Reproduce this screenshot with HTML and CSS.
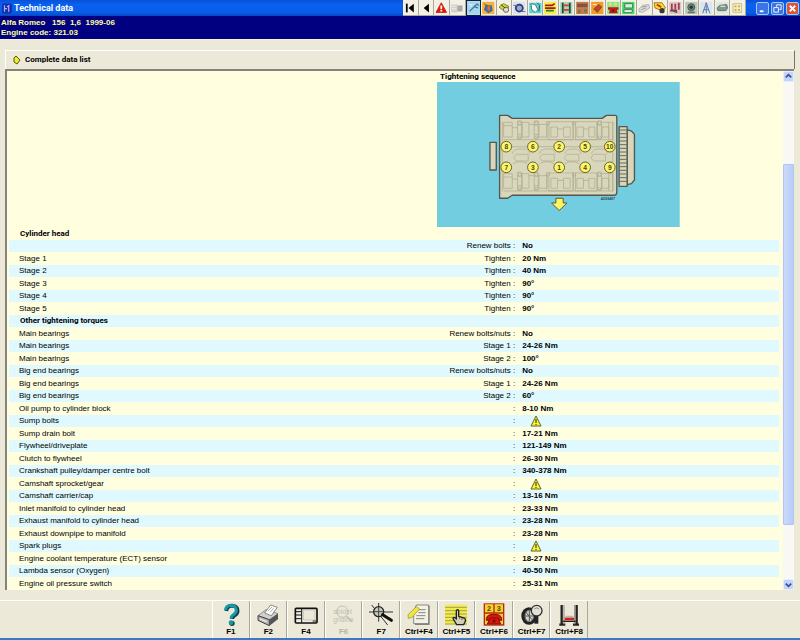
FILE: index.html
```html
<!DOCTYPE html>
<html lang="en">
<head>
<meta charset="utf-8">
<title>Technical data</title>
<link rel="stylesheet" href="styles.css">
</head>
<body>
<header class="titlebar">
  <svg class="app-icon" viewBox="0 0 12 12"><rect width="12" height="12" rx="2" fill="#1a2bb0"/><path d="M3 2v8M3 6h3M8 3v7M6 4l3-2" stroke="#9ab4f4" stroke-width="1.5" fill="none"/></svg>
  <h1>Technical data</h1>
  <nav class="tools" aria-label="Modules">
    <button aria-label="First"><svg viewBox="0 0 16 16"><path d="M4 3v10" stroke="#000" stroke-width="2"/><path d="M12 3v10L6 8z"/></svg></button>
    <button aria-label="Previous"><svg viewBox="0 0 16 16"><path d="M11 3v10L5 8z"/></svg></button>
    <button aria-label="Warnings"><svg viewBox="0 0 16 16"><path d="M8 2l6 11H2z" fill="#e01808" stroke="#c02010"/><path d="M8 5v4M8 10v2" stroke="#fff" stroke-width="2"/></svg></button>
    <button aria-label="Identification"><svg viewBox="0 0 16 16"><path d="M1 4h7v9H1z" fill="#d2d0c8"/><path d="M8 5h6v7H8z" fill="#aaa9a4"/><path d="M2 6h4M2 9h5" stroke="#f5f5f5"/></svg></button>
    <button class="pressed" aria-label="Technical data"><svg viewBox="0 0 16 16"><path d="M0 0h16v16H0z" fill="#a4d5ed"/><path d="M3 12l8-8M8 6l5 2M11 3l3 2" stroke="#466b8d" stroke-width="1.5"/><path d="M2 4h5M3 6h3" stroke="#e9f4f5"/></svg></button>
    <button aria-label="Service"><svg viewBox="0 0 16 16"><path d="M1 1h14v14H1z" fill="#f4b33d"/><path d="M5 4l7 1 1 6-5 3-5-4z" fill="#3271a9"/><path d="M7 5h3v6H7z" fill="#e96c20"/><path d="M3 3l4 3" stroke="#845629"/></svg></button>
    <button aria-label="Repair times"><svg viewBox="0 0 16 16"><path d="M2 7l5-4 6 3-1 3-6 1z" fill="#d7dc20" stroke="#777718"/><circle cx="10" cy="10" r="3" fill="#ddd" stroke="#555"/><path d="M4 4l5 4" stroke="#333"/></svg></button>
    <button aria-label="Wheels"><svg viewBox="0 0 16 16"><path d="M1 1h14v14H1z" fill="#d9e2f4"/><circle cx="8" cy="8" r="4" fill="#9cabc4" stroke="#283b75" stroke-width="2"/><path d="M1 5h5M10 12h5" stroke="#5268a0"/></svg></button>
    <button aria-label="Timing belts"><svg viewBox="0 0 16 16"><path d="M1 2h14v12H1z" fill="#54d9da"/><path d="M3 3l5 1 3 6-3 3-4-3z" fill="#fff" stroke="#356d71"/><path d="M10 2l3 3-1 7" stroke="#263d44" fill="none"/></svg></button>
    <button aria-label="Wiring"><svg viewBox="0 0 16 16"><path d="M1 1h14v14H1z" fill="#f5ed45"/><path d="M2 5h8l3-2M2 8h12" stroke="#a9151c" stroke-width="2" fill="none"/><path d="M3 11h9" stroke="#257c31" stroke-width="2"/></svg></button>
    <button aria-label="Lift"><svg viewBox="0 0 16 16"><path d="M1 1h14v14H1z" fill="#a9d4b7"/><path d="M4 2v12M12 2v12" stroke="#164e38" stroke-width="2"/><path d="M5 5h6M5 10h6" stroke="#e1382b" stroke-width="2"/></svg></button>
    <button aria-label="Engine"><svg viewBox="0 0 16 16"><path d="M1 1h14v14H1z" fill="#cf7845"/><path d="M2 3h12v4H2z" fill="#765747"/><path d="M3 10h3v4H3zm7-1h3v4h-3z" fill="#5d806c"/></svg></button>
    <button aria-label="Fuel system"><svg viewBox="0 0 16 16"><path d="M1 1h14v14H1z" fill="#f39b27"/><path d="M4 9l6-5 3 3-5 6z" fill="#d13d19" stroke="#555"/><path d="M3 4h4" stroke="#fff"/></svg></button>
    <button aria-label="Help desk"><svg viewBox="0 0 16 16"><path d="M1 1h14v14H1z" fill="#8ee58f"/><path d="M3 2h3v3H3zm6 0h3v3H9z" fill="#e7e55d"/><path d="M2 7h12v3h-2l1 4H3l1-4H2z" fill="#c21b17"/><circle cx="8" cy="11" r="1" fill="#222"/></svg></button>
    <button aria-label="Diagnostics"><svg viewBox="0 0 16 16"><path d="M1 1h14v14H1z" fill="#42d964"/><path d="M4 3h9v5H4z" fill="#d8ead8" stroke="#317343"/><path d="M3 10h10l-1 3H3z" fill="#fff" stroke="#317343"/></svg></button>
    <button aria-label="Body"><svg viewBox="0 0 16 16"><path d="M2 9l4-4 7-1 1 4-8 5-4-1z" fill="#dedbd4" stroke="#aaa"/><path d="M5 7l6-1M4 10l6-2" stroke="#999"/></svg></button>
    <button aria-label="Electrical"><svg viewBox="0 0 16 16"><path d="M1 2h9l4 6-4 3-8-3z" fill="#f2e029" stroke="#a4680c"/><path d="M4 4l5 3" stroke="#d12b1b" stroke-width="2"/><circle cx="10" cy="11" r="3" fill="#393939"/></svg></button>
    <button aria-label="Brakes"><svg viewBox="0 0 16 16"><path d="M1 1h14v14H1z" fill="#dfc5c7"/><path d="M4 3v7l6 3M8 3v7M12 2v8" stroke="#a93548" stroke-width="2" fill="none"/><path d="M2 11h8" stroke="#545261" stroke-width="2"/></svg></button>
    <button aria-label="Air conditioning"><svg viewBox="0 0 16 16"><path d="M1 1h14v14H1z" fill="#b8c9bd"/><circle cx="8" cy="7" r="4" fill="#718278" stroke="#40564b"/><circle cx="8" cy="7" r="2" fill="#333"/><path d="M4 13h8" stroke="#61736a" stroke-width="2"/></svg></button>
    <button aria-label="Wheel alignment"><svg viewBox="0 0 16 16"><path d="M1 1h14v14H1z" fill="#dbe5ee"/><path d="M8 2L4 14M8 2l4 12M5 10h6M8 2v12" stroke="#3975b5" fill="none"/><path d="M8 3v5" stroke="#d17b66"/></svg></button>
    <button aria-label="Vehicle"><svg viewBox="0 0 16 16"><path d="M1 1h14v14H1z" fill="#e0e7df"/><path d="M2 8l3-3 8-1 1 4-2 3H3z" fill="#819a8e" stroke="#597466"/><path d="M6 6h5" stroke="#fff"/></svg></button>
    <button aria-label="Notes"><svg viewBox="0 0 16 16"><path d="M3 3h10v10H3z" fill="#f8ecab" stroke="#c9ba76"/><path d="M5 5h2v2H5zm4 0h2v2H9zM5 9h2v2H5zm4 0h2v2H9z" fill="#bf9a90"/></svg></button>
  </nav>
  <div class="window-buttons">
    <button aria-label="Minimize"><svg viewBox="0 0 12 12"><path d="M3 9h4" stroke="#fff" stroke-width="2"/></svg></button>
    <button aria-label="Restore"><svg viewBox="0 0 12 12"><path d="M5 4V2h5v5H8M2 5h5v5H2z" stroke="#fff" fill="none"/></svg></button>
    <button class="close" aria-label="Close"><svg viewBox="0 0 12 12"><path d="M3 3l6 6M9 3L3 9" stroke="#fff" stroke-width="2"/></svg></button>
  </div>
</header>
<section class="vehicle"><div>Alfa Romeo &nbsp; 156 &nbsp;1,6 &nbsp;1999-06</div><div>Engine code: 321.03</div></section>

<main class="workspace">
  <div class="list-heading">
    <svg viewBox="0 0 8 10"><path d="M1 3l2-2 4 4-3 4-3-2z" fill="#eded2b" stroke="#555810"/></svg>
    <h2>Complete data list</h2>
  </div>
  <div class="panel">
    <div class="data">
      <figure>
        <figcaption>Tightening sequence</figcaption>
        <svg class="diagram" viewBox="-144 -69 729 435" role="img" aria-label="Cylinder head bolt order">
          <defs>
            <g id="valves" fill="none" stroke="#aaa88c" stroke-width="2">
              <path d="M12 14H38V24H12ZM12 24V58H38V24M38 30H54M54 10V62H66V10ZM54 22H66M54 50H66M68 14H88V58H68ZM88 20H104M104 10V62H116V10ZM104 22H116M104 50H116M118 20H142V58H118ZM142 10V62"/>
              <path d="M148 12H220V66H148ZM154 28H174V58H154ZM174 34H192M192 28H212V58H192ZM222 10V62M228 12H292V66H228ZM232 28H252V58H232ZM252 34H268M268 28H286V58H268ZM294 10V62H306V10ZM294 22H306M308 28H328V58H308ZM328 14V66M12 66H340V14H308"/>
              <circle cx="60" cy="16" r="5"/><circle cx="60" cy="60" r="5"/><circle cx="110" cy="16" r="5"/><circle cx="110" cy="60" r="5"/><circle cx="145" cy="16" r="5"/><circle cx="224" cy="16" r="5"/><circle cx="300" cy="16" r="5"/><circle cx="300" cy="60" r="5"/>
            </g>
          </defs>
          <path d="M-144-69h729v435h-729z" fill="#73cde1"/>
          <g fill="#d9d7bb" stroke="#55574b" stroke-width="4" stroke-linejoin="round">
            <path d="M15 112h19v83H15z"/>
            <path d="M427 74l13 4 9 10v137l-9 11-13 3z"/>
            <path d="M403 65h24v179h-24z"/>
            <path d="M44 31h24l14 9h270l13-9h26q5 0 5 6v225q0 9-8 9H82l-14 9H44z"/>
          </g>
          <path d="M404 75h22M404 86h22M404 97h22M404 108h22M404 119h22M404 130h22M404 141h22M404 152h22M404 163h22M404 174h22M404 185h22M404 196h22M404 207h22M404 218h22M404 229h22" stroke="#66685a" stroke-width="3"/>
          <use href="#valves" x="44" y="38"/>
          <use href="#valves" x="44" y="192"/>
          <g fill="none" stroke="#aaa88c" stroke-width="2">
            <path d="M80 125h48M160 125h47M239 125h46M317 125h42M52 50v210M384 50v210"/>
            <path d="M94 148h36v20H94l-8-10zM172 148h36v20h-36l-8-10zM246 148h36v20h-36l-8-10zM326 148h36v20h-36l-8-10z"/>
            <path d="M82 146q4-14 20-14h16q12 0 17 14M164 146q4-14 20-14h12q12 0 16 14M240 146q4-14 20-14h12q12 0 16 14M320 146q4-14 20-14h12q12 0 16 14M84 176q20-12 44 0M164 176q20-12 44 0M240 176q20-12 44 0"/>
          </g>
          <g class="bolts">
            <circle cx="64" cy="125" r="16"/><circle cx="144" cy="125" r="16"/><circle cx="223" cy="125" r="16"/><circle cx="301" cy="125" r="16"/><circle cx="375" cy="125" r="16"/>
            <circle cx="64" cy="187" r="16"/><circle cx="144" cy="187" r="16"/><circle cx="223" cy="187" r="16"/><circle cx="301" cy="187" r="16"/><circle cx="375" cy="187" r="16"/>
          </g>
          <g class="bolt-numbers">
            <text x="64" y="132">8</text><text x="144" y="132">6</text><text x="223" y="132">2</text><text x="301" y="132">5</text><text x="375" y="132">10</text>
            <text x="64" y="194">7</text><text x="144" y="194">3</text><text x="223" y="194">1</text><text x="301" y="194">4</text><text x="375" y="194">9</text>
          </g>
          <path d="M213 280h22v14h11l-23 23-23-23h13z" fill="#fcf565" stroke="#5d5b28" stroke-width="3"/>
          <text class="drawing-id" x="348" y="284">AD26487</text>
        </svg>
      </figure>
      <table>
        <colgroup><col class="c-item"><col class="c-prop"><col></colgroup>
        <tbody>
          <tr><th colspan="3">Cylinder head</th></tr>
          <tr><td></td><td>Renew bolts :</td><td>No</td></tr>
          <tr><td>Stage 1</td><td>Tighten :</td><td>20 Nm</td></tr>
          <tr><td>Stage 2</td><td>Tighten :</td><td>40 Nm</td></tr>
          <tr><td>Stage 3</td><td>Tighten :</td><td>90°</td></tr>
          <tr><td>Stage 4</td><td>Tighten :</td><td>90°</td></tr>
          <tr><td>Stage 5</td><td>Tighten :</td><td>90°</td></tr>
          <tr><th colspan="3">Other tightening torques</th></tr>
          <tr><td>Main bearings</td><td>Renew bolts/nuts :</td><td>No</td></tr>
          <tr><td>Main bearings</td><td>Stage 1 :</td><td>24-26 Nm</td></tr>
          <tr><td>Main bearings</td><td>Stage 2 :</td><td>100°</td></tr>
          <tr><td>Big end bearings</td><td>Renew bolts/nuts :</td><td>No</td></tr>
          <tr><td>Big end bearings</td><td>Stage 1 :</td><td>24-26 Nm</td></tr>
          <tr><td>Big end bearings</td><td>Stage 2 :</td><td>60°</td></tr>
          <tr><td>Oil pump to cylinder block</td><td>:</td><td>8-10 Nm</td></tr>
          <tr><td>Sump bolts</td><td>:</td><td><svg class="warn" viewBox="0 0 12 12"><path d="M6 1l5 10H1z" fill="#fbf338" stroke="#66651c"/><path d="M6 4v4M6 9v1" stroke="#222"/></svg></td></tr>
          <tr><td>Sump drain bolt</td><td>:</td><td>17-21 Nm</td></tr>
          <tr><td>Flywheel/driveplate</td><td>:</td><td>121-149 Nm</td></tr>
          <tr><td>Clutch to flywheel</td><td>:</td><td>26-30 Nm</td></tr>
          <tr><td>Crankshaft pulley/damper centre bolt</td><td>:</td><td>340-378 Nm</td></tr>
          <tr><td>Camshaft sprocket/gear</td><td>:</td><td><svg class="warn" viewBox="0 0 12 12"><path d="M6 1l5 10H1z" fill="#fbf338" stroke="#66651c"/><path d="M6 4v4M6 9v1" stroke="#222"/></svg></td></tr>
          <tr><td>Camshaft carrier/cap</td><td>:</td><td>13-16 Nm</td></tr>
          <tr><td>Inlet manifold to cylinder head</td><td>:</td><td>23-33 Nm</td></tr>
          <tr><td>Exhaust manifold to cylinder head</td><td>:</td><td>23-28 Nm</td></tr>
          <tr><td>Exhaust downpipe to manifold</td><td>:</td><td>23-28 Nm</td></tr>
          <tr><td>Spark plugs</td><td>:</td><td><svg class="warn" viewBox="0 0 12 12"><path d="M6 1l5 10H1z" fill="#fbf338" stroke="#66651c"/><path d="M6 4v4M6 9v1" stroke="#222"/></svg></td></tr>
          <tr><td>Engine coolant temperature (ECT) sensor</td><td>:</td><td>18-27 Nm</td></tr>
          <tr><td>Lambda sensor (Oxygen)</td><td>:</td><td>40-50 Nm</td></tr>
          <tr><td>Engine oil pressure switch</td><td>:</td><td>25-31 Nm</td></tr>
        </tbody>
      </table>
    </div>
    <div class="scrollbar">
      <button aria-label="Scroll up"><svg viewBox="0 0 10 10"><path d="M2 6l3-3 3 3" fill="none" stroke="#3b5590" stroke-width="2"/></svg></button>
      <div class="track"><div class="thumb"></div></div>
      <button aria-label="Scroll down"><svg viewBox="0 0 10 10"><path d="M2 4l3 3 3-3" fill="none" stroke="#3b5590" stroke-width="2"/></svg></button>
    </div>
  </div>
</main>

<footer class="keybar">
  <div class="keys">
    <button><svg viewBox="0 0 72 72"><path d="M22 24q2-16 18-16 16 2 16 16 0 8-10 14-6 4-6 10" fill="none" stroke="#123b4a" stroke-width="11"/><path d="M19 22q2-14 17-15 15 1 16 15 0 8-10 14-6 4-6 11" fill="none" stroke="#159aa5" stroke-width="9"/><circle cx="39" cy="61" r="8" fill="#123b4a"/><circle cx="36" cy="59" r="7" fill="#159aa5"/></svg>F1</button>
    <button><svg viewBox="0 0 72 72"><path d="M6 38l24-18 36 12v16L40 68 6 52z" fill="#8d8d8b"/><path d="M6 38l24-18 36 12-26 18z" fill="#d1d0cc" stroke="#777" stroke-width="2"/><path d="M26 30L44 6l20 7-18 25z" fill="#fff" stroke="#555" stroke-width="2"/><path d="M36 24l12-12M42 28l12-14" stroke="#8d8d93" stroke-width="2"/><path d="M40 50v18L6 52V38z" fill="#b5b4b0" stroke="#444" stroke-width="3"/><path d="M40 50l26-18v16L40 68z" fill="#555"/><path d="M12 48l20 8" stroke="#eee" stroke-width="4"/></svg>F2</button>
    <button><svg viewBox="0 0 72 72"><rect x="4" y="16" width="65" height="44" rx="3" fill="#f0eee2" stroke="#111" stroke-width="5"/><path d="M23 16v43M4 26h18M4 36h18M4 47h18M56 54h10" stroke="#111" stroke-width="3"/><path d="M28 21h35v30H28z" fill="#ece9d8" stroke="#b9b7a9" stroke-width="2"/></svg>F4</button>
    <button disabled><svg viewBox="0 0 72 72"><g class="ghost-text"><text x="4" y="32">abIdet</text><text x="4" y="56">gridinn</text></g><circle cx="31" cy="26" r="17" fill="none" stroke="#c1bfb4" stroke-width="3"/><path d="M43 39l17 17" stroke="#c1bfb4" stroke-width="5"/></svg>F6</button>
    <button><svg viewBox="0 0 72 72"><path d="M29 0v56M0 27h72M8 6l48 60" stroke="#333" stroke-width="3"/><circle cx="29" cy="26" r="15" fill="#c9c8bc" stroke="#222" stroke-width="4"/><path d="M29 12v28M15 26h28" stroke="#444" stroke-width="3"/><path d="M41 35l26 17" stroke="#111" stroke-width="9" stroke-linecap="round"/></svg>F7</button>
    <button><svg viewBox="0 0 72 72"><path d="M30 8h38v58H24V28z" fill="#8b8a82"/><path d="M28 6h37v56H20V26z" fill="#f3f2e7" stroke="#555" stroke-width="2"/><path d="M34 20h22M34 29h22M28 38h27M27 47h25" stroke="#85847e" stroke-width="3"/><path d="M3 35l25-24 10 7-24 26-10 2z" fill="#f2e63e" stroke="#8d8b30" stroke-width="2"/></svg>Ctrl+F4</button>
    <button><svg viewBox="0 0 72 72"><path d="M3 5h66v60H3z" fill="#f2ea51"/><path d="M3 13h66M3 23h66M3 33h66M3 43h66M3 53h66M3 63h66" stroke="#a5a340" stroke-width="3"/><path d="M37 23q4-6 7 0v17l17 5q5 3 3 10l-5 10H38L27 47q0-8 10 0z" fill="#d0cdbb" stroke="#222" stroke-width="4"/><path d="M47 40v8M54 43v8" stroke="#333" stroke-width="2"/></svg>Ctrl+F5</button>
    <button><svg viewBox="0 0 72 72"><path d="M5 1h62v67H5z" fill="#b92517"/><path d="M9 4h25v24H9zM38 4h25v24H38zM9 32h54v32H9z" fill="#f4d529"/><g class="phone-digits"><text x="15" y="24">2</text><text x="44" y="24">3</text></g><path d="M13 47q1-13 23-13t23 13v5H48v-5H24v5H13z" fill="#d7160e" stroke="#801009" stroke-width="3"/><path d="M24 45h24l8 18H16z" fill="#d7160e" stroke="#801009" stroke-width="3"/><circle cx="36" cy="54" r="5" fill="#801009"/></svg>Ctrl+F6</button>
    <button><svg viewBox="0 0 72 72"><ellipse cx="27" cy="39" rx="23" ry="26" fill="#222"/><ellipse cx="28" cy="39" rx="13" ry="17" fill="#d6d4c9" stroke="#777" stroke-width="3"/><path d="M14 39h27M28 23v32M18 28l18 22" stroke="#555" stroke-width="3"/><path d="M49 34v28" stroke="#222" stroke-width="12"/><circle cx="50" cy="23" r="16" fill="#e4e2d8" stroke="#333" stroke-width="4"/><path d="M43 18q7-7 14 0" stroke="#888" stroke-width="3" fill="none"/></svg>Ctrl+F7</button>
    <button><svg viewBox="0 0 72 72"><path d="M14 6v58M59 6v58M7 65h18M48 65h18" stroke="#222" stroke-width="7"/><path d="M21 6v58M53 6v58" stroke="#8d8c88" stroke-width="3"/><path d="M23 43h28v9H23z" fill="#da1d22"/><path d="M18 55h38" stroke="#222" stroke-width="4"/><path d="M27 38h20l4 6H23z" fill="#b8b6ad"/></svg>Ctrl+F8</button>
  </div>
</footer>
</body>
</html>
```

FILE: styles.css
```css
* { box-sizing: border-box; }

body {
  display: flex;
  flex-direction: column;
  min-height: 100vh;
  margin: 0;
  background: #ece9d8;
  border-bottom: 2px solid #3c78c4;
  color: #000;
  font: 8px/12px "Liberation Sans", Arial, sans-serif;
}

h1, h2, figure { margin: 0; }
h1, h2, th, figcaption { font-family: Roboto, "Liberation Sans", sans-serif; }
button { padding: 0; border: 0; font: inherit; color: inherit; }
svg { display: block; }

.titlebar {
  display: flex;
  align-items: center;
  height: 16px;
  padding: 0 1px 0 2px;
  background: linear-gradient(#0850d8, #0a62f0 30%, #085be6 80%, #0648c0);
}
.app-icon { width: 10px; height: 11px; margin-right: 2px; }
.titlebar h1 { flex: 1; color: #fff; font-size: 9px; }
.tools {
  display: grid;
  grid-template-columns: repeat(22, 1fr);
  width: 43%;
  height: 16px;
}
.tools button {
  background: #f3f1e6;
  border: solid #a9a799;
  border-width: 0 1px 1px 0;
  overflow: hidden;
}
.tools .pressed { border: 1px solid #10203c; }
.tools svg { width: 100%; height: 14px; }
.window-buttons { display: flex; gap: 2px; margin-left: 10px; }
.window-buttons button {
  width: 13px;
  height: 13px;
  border: 1px solid #a9c4f6;
  border-radius: 2px;
  background: #3b74e4;
}
.window-buttons .close { background: #df5532; }

.vehicle {
  padding: 2px 1px;
  height: 24px;
  border-bottom: 1px solid #f5f3e9;
  background: #000080;
  color: #ffff9c;
  font-weight: bold;
  line-height: 10px;
}

.workspace {
  flex: 1;
  display: flex;
  flex-direction: column;
  padding: 10px 5px;
}
.list-heading {
  display: flex;
  align-items: center;
  gap: 4px;
  height: 19px;
  padding-left: 7px;
  border: 1px solid #fff;
  border-right: 1px solid #77756a;
  border-bottom: 0;
}
.list-heading svg { width: 8px; height: 10px; }
.list-heading h2 { font-size: 8px; }

.panel {
  flex: 1;
  display: flex;
  margin-right: 1px;
  border: solid #85837a;
  border-width: 2px 0 0 2px;
  background: #ffffe0;
}
.data { flex: 1; padding: 0 4px 0 2px; }

figure { margin-left: 55.6%; padding-top: 1px; }
figcaption { padding-left: 3px; font-weight: bold; line-height: 10px; }
.diagram { width: 71%; height: 145px; }
.bolts { fill: #fdf56a; stroke: #66622a; stroke-width: 3px; }
.bolt-numbers { font-size: 20px; font-weight: bold; fill: #4d4717; text-anchor: middle; }
.drawing-id { font-size: 10px; font-style: italic; font-weight: bold; fill: #36464a; }

table { width: 100%; table-layout: fixed; border-collapse: collapse; }
.c-item { width: 30%; }
.c-prop { width: 36%; }
tr { height: 13px; }
tr:nth-child(even) { height: 12px; background: #dff9ff; }
td, th { padding: 0; line-height: 12px; text-align: left; white-space: nowrap; }
th { padding-left: 11px; }
td:nth-child(1) { padding-left: 10px; }
td:nth-child(2) { padding-right: 2px; text-align: right; }
td:nth-child(3) { padding-left: 5px; font-weight: bold; }
.warn { width: 12px; height: 12px; margin-left: 8px; }

.scrollbar {
  display: flex;
  flex-direction: column;
  width: 11px;
  background: #f9f8f4;
}
.scrollbar button {
  height: 11px;
  border: 1px solid #e6edfd;
  border-radius: 2px;
  background: #c3d3fb;
}
.track {
  flex: 1;
  display: grid;
  grid-template-rows: 82fr 361fr 54fr;
}
.thumb {
  grid-row: 2;
  border: 1px solid #b0c5f4;
  border-radius: 1px;
  background: linear-gradient(90deg, #cbdafd, #b9cdf8);
}

.keybar { border-top: 1px solid #fff; }
.keys {
  display: grid;
  grid-template-columns: repeat(10, 1fr);
  width: 47%;
  height: 37px;
  margin: 0 auto;
}
.keys button {
  display: flex;
  flex-direction: column;
  align-items: center;
  padding-top: 2px;
  border-left: 1px solid #fff;
  border-right: 1px solid #aaa799;
  background: #ece9d8;
  font-weight: bold;
  line-height: 10px;
}
.keys button:disabled { color: #b5b3a7; }
.keys svg { width: 24px; height: 24px; }
.ghost-text { font-size: 20px; font-weight: normal; fill: #c1bfb4; }
.phone-digits { font-size: 22px; font-weight: bold; fill: #4d4717; }
```
